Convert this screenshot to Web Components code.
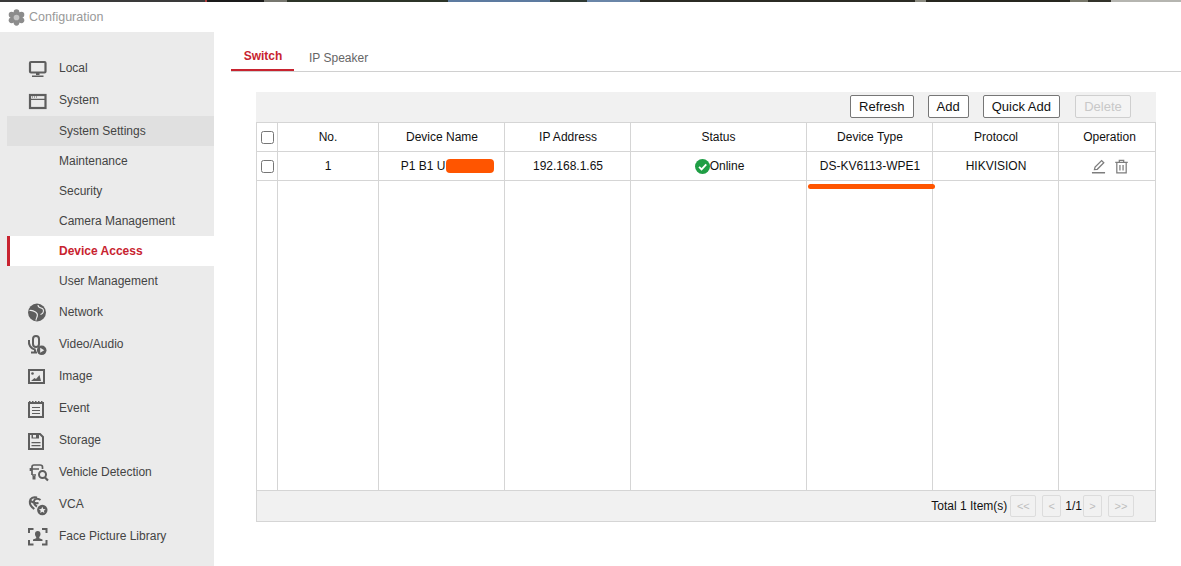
<!DOCTYPE html>
<html>
<head>
<meta charset="utf-8">
<title>Configuration</title>
<style>
  html, body { margin: 0; padding: 0; background: #fff; height: 100%; overflow: hidden; }
  body { font-family: "Liberation Sans", Arial, sans-serif; font-size: 12px; }
</style>
</head>
<body>
<hk-app></hk-app>

<script>
// sidebar icons sit on a 20 box, the small ones on a 24 box (set by size/view attributes)
const ICONS = {
  gear: `<g fill="#8c8c8c"><circle cx="12" cy="12" r="8.500"/><circle cx="12" cy="4.500" r="4"/><circle cx="12" cy="19.500" r="4"/><circle cx="5" cy="8" r="4"/><circle cx="19" cy="8" r="4"/><circle cx="5" cy="16" r="4"/><circle cx="19" cy="16" r="4"/></g><circle cx="12" cy="12" r="4" fill="#c4c4c4"/>`,
  local: `<rect x="3" y="4" width="15.500" height="10.500" rx="1" fill="none" stroke="#5e5e5e" stroke-width="2.200"/><path d="M9 15h3.500v2H9zM5 17.500h11.500V19H5z" fill="#5e5e5e"/>`,
  system: `<rect x="3" y="5" width="15.500" height="13" fill="none" stroke="#5e5e5e" stroke-width="2.200"/><path d="M3 8.800h15.500V10H3zM5 6.500h1v1H5zM7 6.500h1v1H7zM9 6.500h1v1H9z" fill="#5e5e5e"/>`,
  network: `<circle cx="10" cy="10.500" r="9" fill="#5e5e5e"/><path d="M2.500 8.500c2.500-.5 4.500 .5 6 1.500s2.300 2 1.800 4-1.300 2.500-1.300 4.500M11 3c0 2 1 2.500 3 3s2.800 1.800 2.300 3.800-1.800 2.200-2.800 2.700" fill="none" stroke="#ececec" stroke-width="1.100"/>`,
  video: `<rect x="6" y="2" width="6" height="11" rx="3" fill="none" stroke="#5e5e5e" stroke-width="2"/><path d="M2 6c-.5 4 1 9 6.500 9.500M4 18.500h6M8 15.500v3" fill="none" stroke="#5e5e5e" stroke-width="2"/><circle cx="14.700" cy="16.300" r="4.800" fill="#5e5e5e"/><path d="M13.200 13.800l4 2.500-4 2.500z" fill="#ececec"/>`,
  image: `<rect x="2" y="4" width="15" height="13" fill="none" stroke="#5e5e5e" stroke-width="2"/><circle cx="5.500" cy="7.500" r="1.300" fill="#5e5e5e"/><path d="M4 15l3.500-3 1.500 1 3.500-4 1.500 6z" fill="#5e5e5e"/>`,
  event: `<rect x="2" y="5" width="14" height="14" fill="none" stroke="#5e5e5e" stroke-width="2"/><path d="M5 9.500h8M5 12.500h8M5 15.500h8" stroke="#5e5e5e" stroke-width="1.200"/><path d="M2 3h1.500v1.500H2zM5 3h1.500v1.500H5zM8 3h1.500v1.500H8zM11 3h1.500v1.500H11zM14 3h1.500v1.500H14z" fill="#5e5e5e"/>`,
  storage: `<path d="M2 4h11l3 3v12H2z" fill="none" stroke="#5e5e5e" stroke-width="2"/><path d="M4.500 4h7.500v4.500H4.500zM4.500 12h9v1.200h-9zM4.500 15h9v1.200h-9z" fill="#5e5e5e"/><path d="M6 5h3v2.500H6z" fill="#ececec"/>`,
  vehicle: `<path d="M5 13V5c0-1.500 1-2 2-2h6c1.500 0 2.500.5 2.500 2v2M5 7h7M3.500 6v3M5 13h4" fill="none" stroke="#5e5e5e" stroke-width="1.700"/><path d="M5.500 14h3v3.500h-3z" fill="#5e5e5e"/><circle cx="15.500" cy="12.500" r="3.500" fill="none" stroke="#5e5e5e" stroke-width="2"/><path d="M18 15.500l3 3" stroke="#5e5e5e" stroke-width="2.200"/>`,
  vca: `<path d="M10 3.500C6.500 2.500 3 4 2.800 7.500c-.2 3 1.500 5.500 4.500 7.500M13.500 6C11 3.800 7.500 4.500 7 7s1 4.500 3 5.500M2.500 6c2.500 2.500 6 3.500 9 3" fill="none" stroke="#5e5e5e" stroke-width="2"/><circle cx="15.300" cy="16" r="5.200" fill="#5e5e5e"/><path d="M15.300 12.800l1 2.200 2.300.2-1.700 1.500.5 2.300-2.100-1.200-2.100 1.200.5-2.300-1.700-1.500 2.300-.2z" fill="#ececec"/>`,
  face: `<path d="M2 7V3h4.500M15 3h4.500v4M2 14v4.500h4.500M15 18.500h4.500V14" fill="none" stroke="#5e5e5e" stroke-width="2"/><path d="M10.800 5c1.800 0 2.700 1.300 2.700 3 0 1.300-.6 2.300-1.200 3v1.200l3.200 1.300V15H6v-1.500l3.200-1.300V11c-.6-.7-1.200-1.700-1.200-3 0-1.700 .9-3 2.800-3z" fill="#5e5e5e"/>`,
  online: `<circle cx="12" cy="12" r="12" fill="#1f9e45"/><path d="M6.500 12.500l4 4 7.500-8" fill="none" stroke="#fff" stroke-width="3"/>`,
  edit: `<path d="M5.500 17l1-4L17 2.500 20.500 6 10 16.500z" fill="none" stroke="#7d7d7d" stroke-width="2"/><path d="M1.500 22h21" stroke="#7d7d7d" stroke-width="2.400"/>`,
  trash: `<path d="M2 5.500h20M8.500 5V2h7v3M4.500 6v16h15V6M9.500 9.500v9M14.500 9.500v9" fill="none" stroke="#7d7d7d" stroke-width="2"/>`
};

class HkIcon extends HTMLElement {
  connectedCallback() {
    const size = this.getAttribute('size') || 20;
    const view = this.getAttribute('view') || 24;
    this.attachShadow({ mode: 'open' }).innerHTML = `
      <style>:host { display: inline-flex; flex: none; } svg { display: block; overflow: visible; }</style>
      <svg width="${size}" height="${size}" viewBox="0 0 ${view} ${view}">${ICONS[this.getAttribute('name')] || ''}</svg>`;
  }
}
customElements.define('hk-icon', HkIcon);

class HkNavItem extends HTMLElement {
  connectedCallback() {
    const icon = this.getAttribute('icon');
    this.attachShadow({ mode: 'open' }).innerHTML = `
      <style>
        :host {
          display: flex; align-items: center; height: 32px; padding-left: 27px;
          color: #444; font-size: 12px;
        }
        :host([sub]) { height: 30px; padding-left: 59px; }
        :host([selected]) { background: #e0e0e0; margin-left: 7px; padding-left: 52px; }
        :host([active]) {
          background: #fff; margin-left: 7px; padding-left: 49px;
          border-left: 3px solid #c8232f; color: #c8232f; font-weight: bold;
        }
        .icon { width: 32px; display: flex; }
      </style>
      ${icon ? `<span class="icon"><hk-icon name="${icon}" view="20"></hk-icon></span>` : ''}
      <slot></slot>`;
  }
}
customElements.define('hk-nav-item', HkNavItem);

class HkSidebar extends HTMLElement {
  constructor() {
    super();
    this.attachShadow({ mode: 'open' }).innerHTML = `
      <style>
        :host { display: block; flex: none; width: 214px; background: #ebebeb; padding-top: 20px; box-sizing: border-box; }
      </style>
      <hk-nav-item icon="local">Local</hk-nav-item>
      <hk-nav-item icon="system">System</hk-nav-item>
      <hk-nav-item sub selected>System Settings</hk-nav-item>
      <hk-nav-item sub>Maintenance</hk-nav-item>
      <hk-nav-item sub>Security</hk-nav-item>
      <hk-nav-item sub>Camera Management</hk-nav-item>
      <hk-nav-item sub active>Device Access</hk-nav-item>
      <hk-nav-item sub>User Management</hk-nav-item>
      <hk-nav-item icon="network">Network</hk-nav-item>
      <hk-nav-item icon="video">Video/Audio</hk-nav-item>
      <hk-nav-item icon="image">Image</hk-nav-item>
      <hk-nav-item icon="event">Event</hk-nav-item>
      <hk-nav-item icon="storage">Storage</hk-nav-item>
      <hk-nav-item icon="vehicle">Vehicle Detection</hk-nav-item>
      <hk-nav-item icon="vca">VCA</hk-nav-item>
      <hk-nav-item icon="face">Face Picture Library</hk-nav-item>`;
  }
}
customElements.define('hk-sidebar', HkSidebar);

class HkTabs extends HTMLElement {
  constructor() {
    super();
    this.attachShadow({ mode: 'open' }).innerHTML = `
      <style>
        :host { display: flex; height: 40px; box-sizing: border-box; border-bottom: 1px solid #d0d0d0; font-size: 12px; }
        .tab { display: flex; align-items: flex-end; color: #666; }
        .on {
          width: 63px; box-sizing: border-box; justify-content: center; padding: 0 0 6px 1px;
          color: #c8232f; font-weight: bold; border-bottom: 2px solid #c8232f;
        }
        .off { padding: 0 0 6px 15px; }
      </style>
      <div class="tab on">Switch</div>
      <div class="tab off">IP Speaker</div>`;
  }
}
customElements.define('hk-tabs', HkTabs);

class HkButton extends HTMLElement {
  constructor() {
    super();
    this.attachShadow({ mode: 'open' }).innerHTML = `
      <style>
        :host {
          display: inline-flex; align-items: center; justify-content: center; box-sizing: border-box;
          height: 23px; padding: 0 8px; background: #fff; color: #111; font-size: 13px;
          border: 1px solid #767676; border-radius: 2px;
        }
        :host([disabled]) { color: #c8c8c8; border-color: #cfcfcf; background: #f4f4f4; }
      </style>
      <slot></slot>`;
  }
}
customElements.define('hk-button', HkButton);

class HkPager extends HTMLElement {
  constructor() {
    super();
    this.attachShadow({ mode: 'open' }).innerHTML = `
      <style>
        :host {
          display: flex; align-items: center; justify-content: flex-end; box-sizing: border-box;
          height: 31px; padding-right: 21px; background: #f1f1f1; color: #111; font-size: 12px;
          border: 1px solid #d5d5d5; border-top: none;
        }
        .p {
          display: flex; align-items: center; justify-content: center; box-sizing: border-box;
          height: 22px; border: 1px solid #dcdcdc; border-radius: 2px; color: #bdbdbd; font-size: 11px;
        }
        .wide { width: 26px; }
        .narrow { width: 19px; }
      </style>
      <span>Total 1 Item(s)</span>
      <span class="p wide" style="margin-left:3px">&lt;&lt;</span>
      <span class="p narrow" style="margin-left:6px">&lt;</span>
      <span style="margin:0 1px 0 4px">1/1</span>
      <span class="p narrow">&gt;</span>
      <span class="p wide" style="margin-left:6px">&gt;&gt;</span>`;
  }
}
customElements.define('hk-pager', HkPager);

class HkDeviceTable extends HTMLElement {
  constructor() {
    super();
    this.attachShadow({ mode: 'open' }).innerHTML = `
      <style>
        :host { display: block; position: relative; width: 900px; font-size: 12px; color: #111; }
        .toolbar {
          display: flex; align-items: flex-start; justify-content: flex-end; gap: 14px;
          height: 30px; padding: 3px 25px 0 0; box-sizing: border-box; background: #f1f1f1;
        }
        .toolbar hk-button:last-child { width: 56px; margin-left: 1px; }
        table { border-collapse: collapse; table-layout: fixed; width: 900px; background: #fff; }
        td, th { border: 1px solid #d5d5d5; padding: 0; text-align: center; font-weight: normal; height: 28px; }
        td:nth-child(n+3), th:nth-child(n+3) { padding-left: 1px; }
        td:nth-child(5), th:nth-child(5) { padding-left: 0; }
        td:nth-child(8), th:nth-child(8) { padding-left: 5px; }
        tr.fill td { height: 309px; }
        input { display: block; margin: 0 auto; width: 13px; height: 13px; }
        .status { display: inline-flex; align-items: center; vertical-align: middle; padding-left: 2px; }
        .ops { display: flex; justify-content: center; align-items: center; gap: 8px; }
        .redact {
          display: inline-block; width: 48px; height: 14px; margin: 0 -11px 0 1px;
          background: #ff5500; border-radius: 4px; vertical-align: middle;
        }
        .type-mark {
          position: absolute; left: 552px; top: 92px; width: 127px; height: 5px;
          background: #ff5500; border-radius: 3px;
        }
      </style>
      <div class="toolbar">
        <hk-button>Refresh</hk-button>
        <hk-button>Add</hk-button>
        <hk-button>Quick Add</hk-button>
        <hk-button disabled>Delete</hk-button>
      </div>
      <table>
        <colgroup>
          <col style="width:21px"><col style="width:101px"><col style="width:126px"><col style="width:126px">
          <col style="width:176px"><col style="width:126px"><col style="width:126px"><col style="width:97px">
        </colgroup>
        <tr>
          <th><input type="checkbox"></th><th>No.</th><th>Device Name</th><th>IP Address</th>
          <th>Status</th><th>Device Type</th><th>Protocol</th><th>Operation</th>
        </tr>
        <tr>
          <td><input type="checkbox"></td><td>1</td><td>P1 B1 U<span class="redact"></span></td><td>192.168.1.65</td>
          <td><span class="status"><hk-icon name="online" size="15"></hk-icon>Online</span></td>
          <td>DS-KV6113-WPE1</td><td>HIKVISION</td>
          <td><div class="ops"><hk-icon name="edit" size="15"></hk-icon><hk-icon name="trash" size="15"></hk-icon></div></td>
        </tr>
        <tr class="fill"><td></td><td></td><td></td><td></td><td></td><td></td><td></td><td></td></tr>
      </table>
      <hk-pager></hk-pager>
      <div class="type-mark"></div>`;
  }
}
customElements.define('hk-device-table', HkDeviceTable);

class HkApp extends HTMLElement {
  constructor() {
    super();
    this.attachShadow({ mode: 'open' }).innerHTML = `
      <style>
        :host { display: flex; flex-direction: column; height: 566px; overflow: hidden; font-family: "Liberation Sans", Arial, sans-serif; }
        /* bit of desktop wallpaper showing above the window */
        .strip {
          height: 2px; flex: none;
          background: linear-gradient(90deg,
            #3a3a3a 0 205px, #b04040 205px 207px, #1a1a1a 207px 264px, #77776f 264px 287px,
            #2c3428 287px 448px, #5d7ba0 448px 550px, #2f3a34 550px 587px, #6a86a8 587px 640px,
            #2b2b24 640px 915px, #8a8a80 915px 926px, #26261f 926px 1070px, #77776a 1070px 1088px,
            #33332a 1088px 1111px, #b5b5b0 1111px);
        }
        header {
          flex: none; height: 30px; display: flex; align-items: center; gap: 4px; padding-left: 8px;
          color: #999; font-size: 12.5px;
        }
        .body { flex: 1; display: flex; min-height: 0; }
        main { flex: 1; padding: 0 0 0 17px; }
        hk-device-table { margin: 20px 0 0 25px; }
      </style>
      <div class="strip"></div>
      <header><hk-icon name="gear" size="17"></hk-icon>Configuration</header>
      <div class="body">
        <hk-sidebar></hk-sidebar>
        <main>
          <hk-tabs></hk-tabs>
          <hk-device-table></hk-device-table>
        </main>
      </div>`;
  }
}
customElements.define('hk-app', HkApp);
</script>
</body>
</html>
